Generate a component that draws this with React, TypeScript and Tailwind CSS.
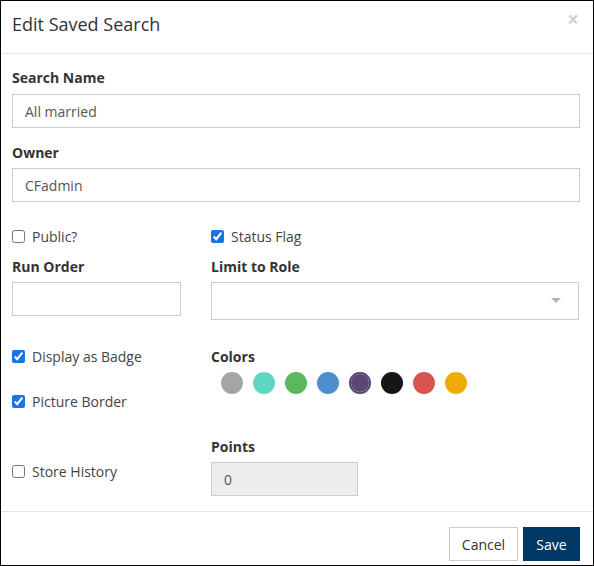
import { useState } from "react";

const COLORS = [
  "#a5a5a5",
  "#5fd6c1",
  "#5cb85c",
  "#4f8ecd",
  "#5b4872",
  "#14161a",
  "#d9534f",
  "#eeab04",
];

const Check = ({ label, checked }: { label: string; checked: boolean }) => {
  const [on, setOn] = useState(checked);
  return (
    <label className="flex h-5 items-center gap-[7px] text-[14px] text-[#444]">
      <input
        type="checkbox"
        checked={on}
        onChange={() => setOn(!on)}
        className="m-0 h-[13px] w-[13px] accent-[#1a73e8]"
      />
      {label}
    </label>
  );
};

const Label = ({ children }: { children: string }) => (
  <div className="h-5 text-[14px] font-bold leading-5 text-[#333]">{children}</div>
);

export default function App() {
  const [selected, setSelected] = useState(4);

  return (
    <div
      className="h-[566px] w-[594px] border border-black bg-white text-[#333]"
      style={{ fontFamily: '"Open Sans", "Liberation Sans", sans-serif' }}
    >
      <div className="flex h-[53px] items-start justify-between border-b border-[#e5e5e5] pl-[11px] pr-[14px]">
        <h4 className="mt-[9px] text-[18px] leading-7 text-[#333]">Edit Saved Search</h4>
        <button className="mt-[6px] text-[21px] font-bold leading-6 text-black/20">×</button>
      </div>

      <div className="px-[11px] pt-[14px]">
        <Label>Search Name</Label>
        <input
          defaultValue="All married"
          className="mt-[6px] block h-[34px] w-[568px] border border-[#ccc] px-3 text-[14px] text-[#555] outline-none"
        />
        <div className="mt-[15px]">
          <Label>Owner</Label>
        </div>
        <input
          defaultValue="CFadmin"
          className="mt-[5px] block h-[34px] w-[568px] border border-[#ccc] px-3 text-[14px] text-[#555] outline-none"
        />

        <div className="mt-[24px] grid grid-cols-[199px_1fr] pb-[15px]">
          <div className="flex flex-col">
            <Check label="Public?" checked={false} />
            <div className="mt-[11px]">
              <Label>Run Order</Label>
            </div>
            <input className="mt-[5px] block h-[34px] w-[169px] border border-[#ccc] px-3 text-[14px] outline-none" />
            <div className="mt-[30px]">
              <Check label="Display as Badge" checked={true} />
            </div>
            <div className="mt-[25px]">
              <Check label="Picture Border" checked={true} />
            </div>
            <div className="mt-[50px]">
              <Check label="Store History" checked={false} />
            </div>
          </div>

          <div className="flex flex-col">
            <Check label="Status Flag" checked={true} />
            <div className="mt-[11px]">
              <Label>Limit to Role</Label>
            </div>
            <div className="relative mt-[5px] h-[38px] w-[368px] border border-[#ccc]">
              <span className="absolute right-[17px] top-[15px] h-0 w-0 border-x-[5px] border-t-[5px] border-x-transparent border-t-[#b5b5b5]" />
            </div>
            <div className="mt-[27px]">
              <Label>Colors</Label>
            </div>
            <div className="mt-[5px] flex h-[22px] gap-[10px] pl-[10px]">
              {COLORS.map((c, i) => (
                <button
                  key={c}
                  onClick={() => setSelected(i)}
                  className={`h-[22px] w-[22px] rounded-full ${
                    i === selected ? "ring-2 ring-inset ring-white outline-2 -outline-offset-2" : ""
                  }`}
                  style={{ backgroundColor: c, outlineColor: i === selected ? c : undefined }}
                />
              ))}
            </div>
            <div className="mt-[43px]">
              <Label>Points</Label>
            </div>
            <input
              defaultValue="0"
              disabled
              className="mt-[5px] block h-[34px] w-[147px] border border-[#ccc] bg-[#eee] px-3 text-[14px] text-[#555]"
            />
          </div>
        </div>
      </div>

      <div className="flex justify-end gap-[5px] border-t border-[#e5e5e5] pr-[13px] pt-[15px]">
        <button className="h-[34px] w-[69px] border border-[#ccc] bg-white text-[14px] text-[#333]">
          Cancel
        </button>
        <button className="h-[34px] w-[57px] border border-[#003865] bg-[#003865] text-[14px] text-white">
          Save
        </button>
      </div>
    </div>
  );
}
